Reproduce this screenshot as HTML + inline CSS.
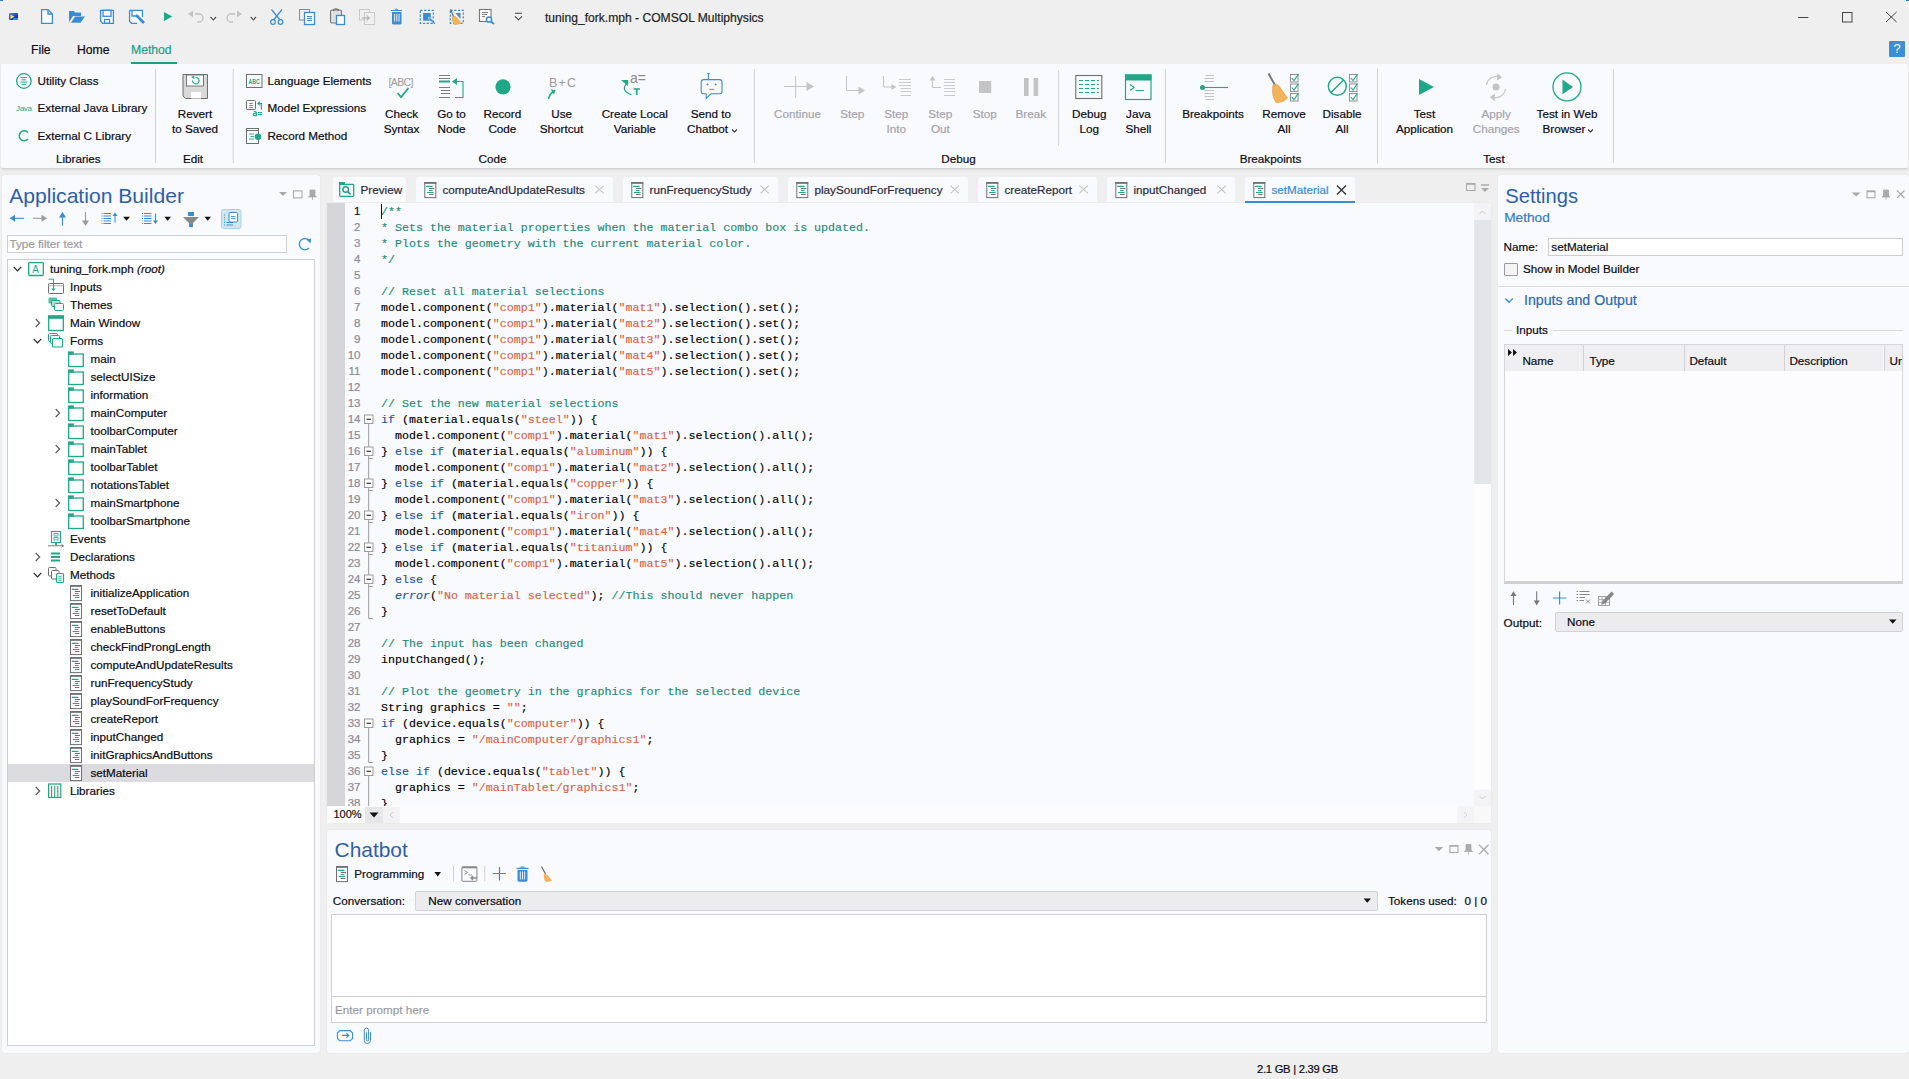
<!DOCTYPE html>
<html><head><meta charset="utf-8">
<style>
*{box-sizing:border-box;margin:0;padding:0}
html,body{width:1909px;height:1079px;overflow:hidden}
body{position:relative;background:#efefef;font-family:"Liberation Sans",sans-serif;font-size:12px;color:#1c1c28;line-height:1}
.a{position:absolute}
.t{position:absolute;white-space:nowrap;line-height:1;-webkit-text-stroke:0.2px currentColor}
.panel{position:absolute;background:#f9fafe;border-radius:2px;box-shadow:0 0 1px 0 rgba(0,0,0,0.18)}
svg{position:absolute;overflow:visible}
.code{position:absolute;font-family:"Liberation Mono",monospace;font-size:11.65px;line-height:16px;white-space:pre;color:#000;-webkit-text-stroke:0.15px currentColor}
.ln{position:absolute;font-family:"Liberation Mono",monospace;font-size:11.65px;line-height:16px;white-space:pre;color:#888;text-align:right}
.c{color:#1b8a7a}.s{color:#dc5f48}.k{color:#22549c}.e{color:#22549c;font-style:italic}
</style></head>
<body>
<!-- title -->
<svg width="1909" height="35" style="left:0;top:0">
 <g fill="none" stroke-width="1.3">
  <defs><linearGradient id="ag" x1="0" y1="0" x2="1" y2="1"><stop offset="0" stop-color="#5a8ae0"/><stop offset="0.6" stop-color="#1d3fb0"/><stop offset="1" stop-color="#0a1a70"/></linearGradient></defs>
  <rect x="9" y="13" width="9" height="7" rx="1" fill="url(#ag)"/>
  <path d="M10.5 14.5 L14.5 16.8 L10.5 19 Z" fill="#f2e860"/>
  <path d="M13.5 18 H18 V20 H13 Z" fill="#3aa0f0" opacity="0.8"/>
  <rect x="0" y="0" width="3" height="1" fill="#2a7ad0"/>
  <rect x="1906" y="0" width="3" height="1" fill="#2a7ad0"/>
  <path d="M41.6 9.6 H48 L52.4 14 V23.4 H41.6 Z" fill="#fff" stroke="#3a8cd2"/><path d="M48 9.6 V14 H52.4" stroke="#3a8cd2"/>
  <path d="M69 11 H74 L75 12.5 H81 V16 H73 L69 22 Z" fill="#3a8cd2"/>
  <path d="M71 22.8 L75 16.5 H85 L80.5 22.8 Z" fill="#3a8cd2"/>
  <path d="M100.6 10.3 H113.4 V23.3 H102.6 L100.6 21.3 Z" fill="#fff" stroke="#3a8cd2"/>
  <rect x="103" y="10.3" width="8" height="6" stroke="#3a8cd2"/>
  <rect x="104.5" y="19.5" width="5" height="3.8" stroke="#3a8cd2"/>
  <path d="M129.6 10.3 H142.4 V17 L137 23.3 H131.6 L129.6 21.3 Z" fill="#fff" stroke="none"/><path d="M129.6 10.3 H142.4 V17 M129.6 10.3 V21.3 L131.6 23.3 H137" stroke="#3a8cd2"/>
  <path d="M132 10.3 V16 H138" stroke="#3a8cd2"/>
  <path d="M136 15 L144 23" stroke="#3a8cd2" stroke-width="2.6"/>
  <path d="M164 12 L172.3 16.5 L164 21 Z" fill="#1ea888"/>
  <path d="M195 14 H199 A4 4 0 0 1 199 22 H197" stroke="#c2c2c2" stroke-width="1.3"/>
  <path d="M188 14 L193 10.8 V17.2 Z" fill="#c2c2c2"/>
  <path d="M210.5 17 L213.3 19.8 L216 17" stroke="#555" stroke-width="1.2"/>
  <path d="M235 14 H231 A4 4 0 0 0 231 22 H233" stroke="#c2c2c2" stroke-width="1.3"/>
  <path d="M242 14 L237 10.8 V17.2 Z" fill="#c2c2c2"/>
  <path d="M250.7 17 L253.4 19.8 L256 17" stroke="#555" stroke-width="1.2"/>
  <g stroke="#3a8cd2" stroke-width="1.2"><path d="M271.5 9.5 L280 20 M282 9.5 L273.5 20"/><circle cx="273" cy="22" r="2.3"/><circle cx="280.5" cy="22" r="2.3"/></g>
  <rect x="299.5" y="9.5" width="10" height="10.5" stroke="#888" stroke-width="1"/>
  <rect x="304.5" y="12.5" width="10" height="12" fill="#fff" stroke="#3a8cd2" stroke-width="1.3"/>
  <path d="M307 16.5 H312 M307 18.5 H312 M307 20.5 H312" stroke="#3a8cd2" stroke-width="1"/>
  <rect x="330.5" y="10" width="11" height="13" rx="1.5" fill="#e0e0e0" stroke="#777" stroke-width="1.1"/>
  <path d="M333.5 11 A2.5 2 0 0 1 338.5 11" stroke="#777" stroke-width="1.5"/>
  <rect x="336.5" y="15.5" width="8" height="9" fill="#fff" stroke="#3a8cd2" stroke-width="1.3"/>
  <rect x="359.5" y="9.5" width="10" height="10.5" stroke="#c8c8c8" stroke-width="1"/>
  <rect x="364.5" y="12.5" width="10" height="12" fill="#f0f0f0" stroke="#c8c8c8" stroke-width="1"/>
  <path d="M362 18 H369 M366.5 15.5 L369.5 18 L366.5 20.5" stroke="#bbb" stroke-width="1.3"/>
  <path d="M391 10.5 H402 M395 9.3 H398" stroke="#3a8cd2" stroke-width="1.1"/>
  <path d="M392 12 H401.5 V23.2 Q401.5 24.6 400 24.6 H393.5 Q392 24.6 392 23.2 Z" fill="#3a8cd2"/>
  <path d="M394.6 13.8 V21.5 M396.8 13.8 V21.5 M399 13.8 V21.5" stroke="#fff" stroke-width="0.9"/>
  <rect x="420.3" y="10.3" width="13" height="13" stroke="#3a8cd2" stroke-width="1.2" stroke-dasharray="2.2 1.6"/>
  <rect x="423.1" y="13" width="7.7" height="7.7" fill="#3a8cd2"/>
  <path d="M428.3 17 L433.4 20 L430 21.8 Z" fill="#3a8cd2" stroke="#f0f0f0" stroke-width="0.6"/>
  <path d="M431.5 20.5 L434.9 23.8" stroke="#3a8cd2" stroke-width="1.2"/>
  <rect x="450.3" y="10.3" width="13" height="13" stroke="#3a8cd2" stroke-width="1.2" stroke-dasharray="2.2 1.6"/>
  <path d="M455.4 13 H460.5 V18.9 Z" fill="#3a8cd2"/>
  <path d="M450.6 9.3 L453.6 17" stroke="#666" stroke-width="1.1"/>
  <path d="M452.5 16.5 Q455 15.5 456.5 17.5 L461 22.5 Q458 25 454 24.5 Q451.5 20 452.5 16.5 Z" fill="#f0b65a" stroke="#e09a3a" stroke-width="0.5"/>
  <rect x="479.5" y="9.5" width="11.5" height="12" stroke="#777" stroke-width="1.1" fill="#fff"/>
  <path d="M482 12.5 H488 M482 14.5 H487 M482 16.5 H485" stroke="#777" stroke-width="0.9"/>
  <circle cx="489" cy="19.5" r="2.6" stroke="#3a8cd2" stroke-width="1.5" fill="#fff"/>
  <path d="M491 21.5 L494 24.2" stroke="#3a8cd2" stroke-width="1.8"/>
  <path d="M515 13.3 H522 M515 16.3 L518.5 19.8 L522 16.3" stroke="#444" stroke-width="1.1"/>
 </g>
 <g stroke="#444" stroke-width="1" fill="none">
  <path d="M1798 17.5 H1808.4"/>
  <rect x="1842.5" y="12.5" width="9.5" height="9.5"/>
  <path d="M1886 12 L1896.6 22 M1896.6 12 L1886 22"/>
 </g>
</svg>
<div class="t" style="left:545.00px;top:12.26px;font-size:12.1px;color:#222;">tuning_fork.mph - COMSOL Multiphysics</div>
<div class="t" style="left:31.00px;top:43.67px;font-size:12.2px;color:#0a0a14;">File</div>
<div class="t" style="left:77.00px;top:43.67px;font-size:12.2px;color:#0a0a14;">Home</div>
<div class="t" style="left:131.00px;top:43.67px;font-size:12.2px;color:#1aa08a;">Method</div>
<div class="a" style="left:131px;top:62px;width:46px;height:2px;background:#1aa08a"></div>
<div class="a" style="left:1889px;top:41px;width:16px;height:16px;background:#3a8fd6;border-radius:1px;color:#fff;font-size:13px;text-align:center;line-height:16px">?</div>
<!-- panels -->
<div class="panel" style="left:1px;top:64px;width:1907px;height:105px;border-bottom:1px solid #d4d4d4;box-shadow:0 1px 2px rgba(0,0,0,0.08)"></div>
<div class="panel" style="left:2px;top:175px;width:318px;height:878px"></div>
<div class="panel" style="left:327px;top:203px;width:1164px;height:620px;border-radius:0 0 4px 4px"></div>
<div class="panel" style="left:327px;top:830px;width:1164px;height:223px"></div>
<div class="panel" style="left:1498px;top:175px;width:411px;height:878px"></div>
<div class="t" style="left:1257.00px;top:1064.02px;font-size:11.2px;color:#0a0a14;letter-spacing:-0.25px">2.1 GB | 2.39 GB</div>
<!-- ribbon -->
<svg width="1909" height="170" style="left:0;top:0" fill="none">
<path d="M155.5 69 V163" stroke="#d0d0d4" stroke-width="1"/>
<path d="M233.2 69 V163" stroke="#d0d0d4" stroke-width="1"/>
<path d="M754.4 69 V163" stroke="#d0d0d4" stroke-width="1"/>
<path d="M1058.6 70 V146" stroke="#d0d0d4" stroke-width="1"/>
<path d="M1165.4 69 V163" stroke="#d0d0d4" stroke-width="1"/>
<path d="M1377.5 69 V163" stroke="#d0d0d4" stroke-width="1"/>
<path d="M1613.4 69 V163" stroke="#d0d0d4" stroke-width="1"/>
<circle cx="23.9" cy="81" r="7.3" stroke="#1ea888" stroke-width="1.3"/><path d="M20.5 77.5 H27 M21.5 79.8 H26 M20.5 82.1 H27 M21.5 84.4 H26" stroke="#1ea888" stroke-width="1"/>
<text x="16" y="111" font-family="Liberation Sans" font-size="8" fill="#1ea888" textLength="16">Java</text>
<path d="M28 132.5 A5 5 0 1 0 28 139" stroke="#1ea888" stroke-width="1.4"/>
<path d="M183 74.5 H207.5 V98.5 H185.5 L183 96 Z" fill="#d9d9d9" stroke="#6e6e6e" stroke-width="1"/><rect x="186.5" y="75" width="17" height="11" fill="#fff" stroke="#6e6e6e" stroke-width="0.9"/><rect x="191" y="92" width="10" height="6.5" fill="#fff"/><path d="M192.5 80.5 A3.3 3.3 0 1 0 195.5 77.3" stroke="#1ea888" stroke-width="1.2"/><path d="M191 77 L194 75.8 L194.5 79" fill="#1ea888"/>
<rect x="246.5" y="74.5" width="15.5" height="13" stroke="#6e6e6e" stroke-width="1"/><text x="248.6" y="83.8" font-family="Liberation Sans" font-weight="bold" font-size="6.6" fill="#1ea888" textLength="11.2" lengthAdjust="spacingAndGlyphs">ABC</text>
<rect x="246.5" y="100.5" width="9" height="9" rx="1" fill="#fff" stroke="#6e6e6e" stroke-width="1"/><path d="M249.2 103.4 H252.8 M249.2 105.5 H252.8 M249.2 107.5 H252.8" stroke="#6e6e6e" stroke-width="0.9"/><path d="M259.5 103.5 H261.4 V109.6" stroke="#1ea888" stroke-width="1.2"/><path d="M257 103.5 L259.8 101 V106 Z" fill="#1ea888"/><path d="M253.8 111.6 Q256.4 111.2 256.4 113 V115.6 H254.5 Q253.1 115.6 253.1 114.4 Q253.1 113.4 254.6 113.4 H256.4 M258 112.5 H262 M258 114.5 H262" stroke="#1ea888" stroke-width="1.1"/>
<rect x="246.5" y="128.5" width="12" height="15" stroke="#6e6e6e" stroke-width="1"/><path d="M246.5 130.5 H258.5" stroke="#6e6e6e" stroke-width="1"/><path d="M249 134 H254 M250.5 136.5 H254 M249 139 H254" stroke="#1ea888" stroke-width="0.9"/><circle cx="258" cy="136.8" r="3.3" fill="#1ea888"/>
<text x="388.5" y="86" font-family="Liberation Sans" font-size="10.5" fill="#999" textLength="25">[ABC]</text><path d="M397.5 93 L401 97 L408.5 88" stroke="#1ea888" stroke-width="1.8"/>
<path d="M439 75.5 H450 M439 78.5 H450 M439 87.5 H450 M441 90.5 H450 M441 93.5 H450 M439 97.5 H450" stroke="#6e6e6e" stroke-width="0.9"/><path d="M439 81.5 H450" stroke="#1ea888" stroke-width="2"/><path d="M454 81.5 H463 V97.5 H455" stroke="#1ea888" stroke-width="1.1"/><path d="M452 81.5 L457 78 V85 Z" fill="#1ea888"/>
<circle cx="503" cy="86.8" r="7.6" fill="#1ea888"/>
<text x="549" y="86.5" font-family="Liberation Sans" font-size="12.5" fill="#999" textLength="27">B+C</text><path d="M548.5 99 Q549.5 94 553 92" stroke="#1ea888" stroke-width="1.6"/><path d="M550.5 89.5 L555.5 90 L554 94.5 Z" fill="#1ea888"/>
<text x="630" y="82.8" font-family="Liberation Sans" font-size="14" fill="#8c8c8c">a=</text><path d="M633.5 89 H640 M636.7 89 V95" stroke="#1ea888" stroke-width="1.7"/><path d="M626.5 83.5 Q620.5 91 631.5 94.7" stroke="#1ea888" stroke-width="1.2"/><path d="M621.2 80 L628.3 80 L627.8 86.3 Z" fill="#1ea888"/>
<path d="M708.4 73.5 V79 M707.2 73.5 H709.6" stroke="#3a8cd2" stroke-width="1.1"/><path d="M703.6 79.6 H719.6 Q722 79.6 722 82 V91.4 Q722 93.8 719.6 93.8 H711 L706.2 98.5 V93.8 H703.6 Q701.2 93.8 701.2 91.4 V82 Q701.2 79.6 703.6 79.6 Z" stroke="#3a8cd2" stroke-width="1.1"/><path d="M706.5 84.5 H708.5 M707.5 83.5 V85.5 M714.6 84.5 H716.6 M715.6 83.5 V85.5 M709.3 89.4 H714.2" stroke="#3a8cd2" stroke-width="0.9"/>
<path d="M732 129.5 L734.5 132 L737 129.5" stroke="#333" stroke-width="1.1"/>
<path d="M795.6 76 V97.7 M784 86.5 H807" stroke="#c4c4c4" stroke-width="1"/><path d="M806.5 82 L814 86.5 L806.5 91 Z" fill="#c4c4c4"/>
<path d="M846.5 76 V90.5 H859" stroke="#c4c4c4" stroke-width="1"/><path d="M858.5 86.5 L865 90.5 L858.5 94.5 Z" fill="#c4c4c4"/>
<path d="M883.5 76 V87 H892" stroke="#c4c4c4" stroke-width="1"/><path d="M891.5 84 L896.5 87 L891.5 90 Z" fill="#c4c4c4"/><path d="M899 79.5 H911 M899 82.5 H911 M899 85.5 H911 M900.5 88.5 H911 M900.5 91.5 H911 M900.5 95.5 H911" stroke="#c4c4c4" stroke-width="0.9"/>
<path d="M932.5 80 V87.5 H941" stroke="#c4c4c4" stroke-width="1"/><path d="M929.5 80.5 L932.5 76 L935.5 80.5 Z" fill="#c4c4c4"/><path d="M944 79.5 H955 M944 82.5 H955 M944 85.5 H955 M944 88.5 H955 M944 91.5 H955 M944 95.5 H955" stroke="#c4c4c4" stroke-width="0.9"/>
<rect x="979" y="81" width="12.2" height="12" fill="#c4c4c4"/><rect x="1024" y="78" width="4.6" height="18" fill="#c4c4c4"/><rect x="1033.6" y="78" width="4.6" height="18" fill="#c4c4c4"/>
<rect x="1075.8" y="75.5" width="26" height="23" stroke="#6e6e6e" stroke-width="1.1"/><path d="M1079 80.5 H1083 M1085 80.5 H1089 M1091 80.5 H1095 M1097 80.5 H1099" stroke="#1ea888" stroke-width="1"/><path d="M1079 84.5 H1083 M1085 84.5 H1089 M1091 84.5 H1095 M1097 84.5 H1099" stroke="#1ea888" stroke-width="1"/><path d="M1079 88.5 H1083 M1085 88.5 H1089 M1091 88.5 H1095 M1097 88.5 H1099" stroke="#1ea888" stroke-width="1"/><path d="M1079 92.5 H1083 M1085 92.5 H1089 M1091 92.5 H1095 M1097 92.5 H1099" stroke="#1ea888" stroke-width="1"/>
<rect x="1125.5" y="75" width="25.5" height="24.5" stroke="#1ea888" stroke-width="1.2"/><rect x="1125" y="74.5" width="26.5" height="6" fill="#1ea888"/><path d="M1130 84.5 L1134 87.5 L1130 90.5 M1135.5 90.5 H1144" stroke="#1ea888" stroke-width="1.1"/>
<path d="M1205.5 75.5 H1214 M1204.5 78.5 H1214 M1204.5 81.5 H1214 M1204.5 90.5 H1214 M1204.5 93.5 H1214 M1204.5 96.5 H1214 M1205.5 99.5 H1214" stroke="#bbb" stroke-width="0.9"/><circle cx="1202.5" cy="87.5" r="2.5" fill="#1ea888"/><path d="M1205 87.5 H1228" stroke="#1ea888" stroke-width="1.1"/>
<path d="M1268.5 73.5 L1275.5 86" stroke="#777" stroke-width="2"/><path d="M1273 85 Q1277 83 1279 86 L1287.5 98 Q1283 103 1276 102.5 Q1271 95 1273 85 Z" fill="#f2b35c" stroke="#e09a3a" stroke-width="0.6"/><rect x="1290.5" y="74.5" width="7.5" height="7.5" stroke="#888" stroke-width="0.9"/><path d="M1291.8 78 L1294 80.5 L1298.5 74" stroke="#1ea888" stroke-width="1.1"/><rect x="1290.5" y="84.0" width="7.5" height="7.5" stroke="#888" stroke-width="0.9"/><path d="M1291.8 87.5 L1294 90.0 L1298.5 83.5" stroke="#1ea888" stroke-width="1.1"/><rect x="1290.5" y="93.5" width="7.5" height="7.5" stroke="#888" stroke-width="0.9"/><path d="M1291.8 97 L1294 99.5 L1298.5 93" stroke="#1ea888" stroke-width="1.1"/>
<circle cx="1337.3" cy="86.3" r="9" stroke="#1ea888" stroke-width="1.4"/><path d="M1331 92.6 L1343.6 80" stroke="#1ea888" stroke-width="1.4"/><rect x="1349.5" y="74.5" width="7.5" height="7.5" stroke="#888" stroke-width="0.9"/><path d="M1350.8 78 L1353 80.5 L1357.5 74" stroke="#1ea888" stroke-width="1.1"/><rect x="1349.5" y="84.0" width="7.5" height="7.5" stroke="#888" stroke-width="0.9"/><path d="M1350.8 87.5 L1353 90.0 L1357.5 83.5" stroke="#1ea888" stroke-width="1.1"/><rect x="1349.5" y="93.5" width="7.5" height="7.5" stroke="#888" stroke-width="0.9"/><path d="M1350.8 97 L1353 99.5 L1357.5 93" stroke="#1ea888" stroke-width="1.1"/>
<path d="M1419 79 L1434 87 L1419 95 Z" fill="#1ea888"/>
<circle cx="1496" cy="87" r="3.5" fill="#c4c4c4"/><path d="M1486.5 85 A10 10 0 0 1 1500 77 M1505.5 89 A10 10 0 0 1 1492 97" stroke="#c4c4c4" stroke-width="1.2"/><path d="M1497.5 73 L1502 77.5 L1497 80.5 Z M1494.5 101.5 L1490 97 L1495 93.5 Z" fill="#c4c4c4"/>
<circle cx="1567" cy="86.9" r="14" stroke="#1ea888" stroke-width="1.3"/><path d="M1562.5 79.5 L1573 86.9 L1562.5 94.3 Z" fill="#1ea888"/><path d="M1588 129.5 L1590.5 132 L1593 129.5" stroke="#333" stroke-width="1.1"/>
</svg>
<div class="t" style="left:37.50px;top:74.80px;font-size:11.7px;color:#0a0a14;">Utility Class</div>
<div class="t" style="left:37.50px;top:101.90px;font-size:11.7px;color:#0a0a14;">External Java Library</div>
<div class="t" style="left:37.50px;top:130.10px;font-size:11.7px;color:#0a0a14;">External C Library</div>
<div class="t" style="left:-121.70px;width:400px;text-align:center;top:152.80px;font-size:11.7px;color:#0a0a14;">Libraries</div>
<div class="t" style="left:-5.00px;width:400px;text-align:center;top:107.60px;font-size:11.7px;color:#0a0a14;">Revert</div>
<div class="t" style="left:-5.00px;width:400px;text-align:center;top:122.60px;font-size:11.7px;color:#0a0a14;">to Saved</div>
<div class="t" style="left:-7.00px;width:400px;text-align:center;top:152.80px;font-size:11.7px;color:#0a0a14;">Edit</div>
<div class="t" style="left:267.40px;top:74.80px;font-size:11.7px;color:#0a0a14;">Language Elements</div>
<div class="t" style="left:267.40px;top:101.90px;font-size:11.7px;color:#0a0a14;">Model Expressions</div>
<div class="t" style="left:267.40px;top:130.10px;font-size:11.7px;color:#0a0a14;">Record Method</div>
<div class="t" style="left:201.60px;width:400px;text-align:center;top:107.60px;font-size:11.7px;color:#0a0a14;">Check</div>
<div class="t" style="left:201.60px;width:400px;text-align:center;top:122.60px;font-size:11.7px;color:#0a0a14;">Syntax</div>
<div class="t" style="left:251.50px;width:400px;text-align:center;top:107.60px;font-size:11.7px;color:#0a0a14;">Go to</div>
<div class="t" style="left:251.50px;width:400px;text-align:center;top:122.60px;font-size:11.7px;color:#0a0a14;">Node</div>
<div class="t" style="left:302.40px;width:400px;text-align:center;top:107.60px;font-size:11.7px;color:#0a0a14;">Record</div>
<div class="t" style="left:302.40px;width:400px;text-align:center;top:122.60px;font-size:11.7px;color:#0a0a14;">Code</div>
<div class="t" style="left:361.60px;width:400px;text-align:center;top:107.60px;font-size:11.7px;color:#0a0a14;">Use</div>
<div class="t" style="left:361.60px;width:400px;text-align:center;top:122.60px;font-size:11.7px;color:#0a0a14;">Shortcut</div>
<div class="t" style="left:434.80px;width:400px;text-align:center;top:107.60px;font-size:11.7px;color:#0a0a14;">Create Local</div>
<div class="t" style="left:434.80px;width:400px;text-align:center;top:122.60px;font-size:11.7px;color:#0a0a14;">Variable</div>
<div class="t" style="left:510.80px;width:400px;text-align:center;top:107.60px;font-size:11.7px;color:#0a0a14;">Send to</div>
<div class="t" style="left:507.50px;width:400px;text-align:center;top:122.60px;font-size:11.7px;color:#0a0a14;">Chatbot</div>
<div class="t" style="left:292.50px;width:400px;text-align:center;top:152.80px;font-size:11.7px;color:#0a0a14;">Code</div>
<div class="t" style="left:597.50px;width:400px;text-align:center;top:107.60px;font-size:11.7px;color:#a3a3ad;">Continue</div>
<div class="t" style="left:652.20px;width:400px;text-align:center;top:107.60px;font-size:11.7px;color:#a3a3ad;">Step</div>
<div class="t" style="left:696.30px;width:400px;text-align:center;top:107.60px;font-size:11.7px;color:#a3a3ad;">Step</div>
<div class="t" style="left:696.30px;width:400px;text-align:center;top:122.60px;font-size:11.7px;color:#a3a3ad;">Into</div>
<div class="t" style="left:740.30px;width:400px;text-align:center;top:107.60px;font-size:11.7px;color:#a3a3ad;">Step</div>
<div class="t" style="left:740.30px;width:400px;text-align:center;top:122.60px;font-size:11.7px;color:#a3a3ad;">Out</div>
<div class="t" style="left:784.70px;width:400px;text-align:center;top:107.60px;font-size:11.7px;color:#a3a3ad;">Stop</div>
<div class="t" style="left:830.80px;width:400px;text-align:center;top:107.60px;font-size:11.7px;color:#a3a3ad;">Break</div>
<div class="t" style="left:889.30px;width:400px;text-align:center;top:107.60px;font-size:11.7px;color:#0a0a14;">Debug</div>
<div class="t" style="left:889.30px;width:400px;text-align:center;top:122.60px;font-size:11.7px;color:#0a0a14;">Log</div>
<div class="t" style="left:938.40px;width:400px;text-align:center;top:107.60px;font-size:11.7px;color:#0a0a14;">Java</div>
<div class="t" style="left:938.40px;width:400px;text-align:center;top:122.60px;font-size:11.7px;color:#0a0a14;">Shell</div>
<div class="t" style="left:758.50px;width:400px;text-align:center;top:152.80px;font-size:11.7px;color:#0a0a14;">Debug</div>
<div class="t" style="left:1013.00px;width:400px;text-align:center;top:107.60px;font-size:11.7px;color:#0a0a14;">Breakpoints</div>
<div class="t" style="left:1084.00px;width:400px;text-align:center;top:107.60px;font-size:11.7px;color:#0a0a14;">Remove</div>
<div class="t" style="left:1084.00px;width:400px;text-align:center;top:122.60px;font-size:11.7px;color:#0a0a14;">All</div>
<div class="t" style="left:1142.00px;width:400px;text-align:center;top:107.60px;font-size:11.7px;color:#0a0a14;">Disable</div>
<div class="t" style="left:1142.00px;width:400px;text-align:center;top:122.60px;font-size:11.7px;color:#0a0a14;">All</div>
<div class="t" style="left:1070.50px;width:400px;text-align:center;top:152.80px;font-size:11.7px;color:#0a0a14;">Breakpoints</div>
<div class="t" style="left:1224.50px;width:400px;text-align:center;top:107.60px;font-size:11.7px;color:#0a0a14;">Test</div>
<div class="t" style="left:1224.50px;width:400px;text-align:center;top:122.60px;font-size:11.7px;color:#0a0a14;">Application</div>
<div class="t" style="left:1296.20px;width:400px;text-align:center;top:107.60px;font-size:11.7px;color:#a3a3ad;">Apply</div>
<div class="t" style="left:1296.20px;width:400px;text-align:center;top:122.60px;font-size:11.7px;color:#a3a3ad;">Changes</div>
<div class="t" style="left:1367.00px;width:400px;text-align:center;top:107.60px;font-size:11.7px;color:#0a0a14;">Test in Web</div>
<div class="t" style="left:1364.00px;width:400px;text-align:center;top:122.60px;font-size:11.7px;color:#0a0a14;">Browser</div>
<div class="t" style="left:1294.00px;width:400px;text-align:center;top:152.80px;font-size:11.7px;color:#0a0a14;">Test</div>
<!-- tree -->
<div class="t" style="left:9.20px;top:185.34px;font-size:21.1px;color:#2d5fa8;-webkit-text-stroke:0">Application Builder</div>
<div class="a" style="left:7px;top:235px;width:280px;height:18px;background:#fff;border:1px solid #d0d0d0"></div>
<div class="t" style="left:9.50px;top:238.40px;font-size:11.7px;color:#9a9aa2;">Type filter text</div>
<div class="a" style="left:7px;top:259px;width:308px;height:787px;background:#fff;border:1px solid #cdcdd2"></div>
<div class="a" style="left:8px;top:764px;width:306px;height:18px;background:#dcdce0"></div>
<div class="t" style="left:50.00px;top:263.40px;font-size:11.7px;color:#0a0a14;">tuning_fork.mph <i>(root)</i></div>
<div class="t" style="left:70.00px;top:281.40px;font-size:11.7px;color:#0a0a14;">Inputs</div>
<div class="t" style="left:70.00px;top:299.40px;font-size:11.7px;color:#0a0a14;">Themes</div>
<div class="t" style="left:70.00px;top:317.40px;font-size:11.7px;color:#0a0a14;">Main Window</div>
<div class="t" style="left:70.00px;top:335.40px;font-size:11.7px;color:#0a0a14;">Forms</div>
<div class="t" style="left:90.50px;top:353.40px;font-size:11.7px;color:#0a0a14;">main</div>
<div class="t" style="left:90.50px;top:371.40px;font-size:11.7px;color:#0a0a14;">selectUISize</div>
<div class="t" style="left:90.50px;top:389.40px;font-size:11.7px;color:#0a0a14;">information</div>
<div class="t" style="left:90.50px;top:407.40px;font-size:11.7px;color:#0a0a14;">mainComputer</div>
<div class="t" style="left:90.50px;top:425.40px;font-size:11.7px;color:#0a0a14;">toolbarComputer</div>
<div class="t" style="left:90.50px;top:443.40px;font-size:11.7px;color:#0a0a14;">mainTablet</div>
<div class="t" style="left:90.50px;top:461.40px;font-size:11.7px;color:#0a0a14;">toolbarTablet</div>
<div class="t" style="left:90.50px;top:479.40px;font-size:11.7px;color:#0a0a14;">notationsTablet</div>
<div class="t" style="left:90.50px;top:497.40px;font-size:11.7px;color:#0a0a14;">mainSmartphone</div>
<div class="t" style="left:90.50px;top:515.40px;font-size:11.7px;color:#0a0a14;">toolbarSmartphone</div>
<div class="t" style="left:70.00px;top:533.40px;font-size:11.7px;color:#0a0a14;">Events</div>
<div class="t" style="left:70.00px;top:551.40px;font-size:11.7px;color:#0a0a14;">Declarations</div>
<div class="t" style="left:70.00px;top:569.40px;font-size:11.7px;color:#0a0a14;">Methods</div>
<div class="t" style="left:90.50px;top:587.40px;font-size:11.7px;color:#0a0a14;">initializeApplication</div>
<div class="t" style="left:90.50px;top:605.40px;font-size:11.7px;color:#0a0a14;">resetToDefault</div>
<div class="t" style="left:90.50px;top:623.40px;font-size:11.7px;color:#0a0a14;">enableButtons</div>
<div class="t" style="left:90.50px;top:641.40px;font-size:11.7px;color:#0a0a14;">checkFindProngLength</div>
<div class="t" style="left:90.50px;top:659.40px;font-size:11.7px;color:#0a0a14;">computeAndUpdateResults</div>
<div class="t" style="left:90.50px;top:677.40px;font-size:11.7px;color:#0a0a14;">runFrequencyStudy</div>
<div class="t" style="left:90.50px;top:695.40px;font-size:11.7px;color:#0a0a14;">playSoundForFrequency</div>
<div class="t" style="left:90.50px;top:713.40px;font-size:11.7px;color:#0a0a14;">createReport</div>
<div class="t" style="left:90.50px;top:731.40px;font-size:11.7px;color:#0a0a14;">inputChanged</div>
<div class="t" style="left:90.50px;top:749.40px;font-size:11.7px;color:#0a0a14;">initGraphicsAndButtons</div>
<div class="t" style="left:90.50px;top:767.40px;font-size:11.7px;color:#0a0a14;">setMaterial</div>
<div class="t" style="left:70.00px;top:785.40px;font-size:11.7px;color:#0a0a14;">Libraries</div>
<svg width="330" height="1079" style="left:0;top:0" fill="none">
<path d="M11 218.3 H24" stroke="#3a8cd2" stroke-width="1.1"/><path d="M9.7 218.3 L15 214.8 V221.8 Z" fill="#3a8cd2"/><path d="M33 218.3 H45" stroke="#999" stroke-width="1.1"/><path d="M47 218.3 L41.5 214.8 V221.8 Z" fill="#999"/><path d="M62.5 214 V225.8" stroke="#3a8cd2" stroke-width="1.1"/><path d="M62.5 212 L59 217.5 H66 Z" fill="#3a8cd2"/><path d="M85.5 212 V222" stroke="#999" stroke-width="1.1"/><path d="M85.5 226 L82 220.5 H89 Z" fill="#999"/>
<path d="M101.5 213.5 H102.5 M101.5 216 H102.5 M101.5 218.5 H102.5 M101.5 221 H102.5 M101.5 223.5 H102.5" stroke="#3a8cd2" stroke-width="1"/><path d="M103.5 213.5 H111.0 M103.5 216 H111.0 M103.5 218.5 H111.0 M103.5 221 H111.0 M103.5 223.5 H111.0" stroke="#3a8cd2" stroke-width="1"/><path d="M115.0 214 V222.5" stroke="#3a8cd2" stroke-width="1.1"/><path d="M115.0 212.5 L112.5 216 H117.5 Z" fill="#3a8cd2"/><path d="M142 213.5 H143 M142 216 H143 M142 218.5 H143 M142 221 H143 M142 223.5 H143" stroke="#3a8cd2" stroke-width="1"/><path d="M144 213.5 H151.5 M144 216 H151.5 M144 218.5 H151.5 M144 221 H151.5 M144 223.5 H151.5" stroke="#3a8cd2" stroke-width="1"/><path d="M155.5 213.5 V222" stroke="#3a8cd2" stroke-width="1.1"/><path d="M155.5 224 L153 220.5 H158 Z" fill="#3a8cd2"/><path d="M123 216.8 L130 216.8 L126.5 220.7 Z" fill="#111"/><path d="M164.4 216.8 L171 216.8 L167.7 220.7 Z" fill="#111"/><path d="M204.5 216.8 L211 216.8 L207.7 220.7 Z" fill="#111"/>
<rect x="188" y="212" width="6" height="4" fill="#3a8cd2"/><path d="M183 217 H199 L193 223 V227 H189 V223 Z" fill="#888"/><rect x="189.8" y="224" width="2.4" height="3.2" fill="#3a8cd2"/>
<rect x="221.5" y="209.5" width="19.5" height="19" rx="2" fill="#cfe5f8" stroke="#a9d0f2" stroke-width="1"/><rect x="229" y="212.5" width="8.5" height="9.5" rx="1" fill="#fff" stroke="#3a8cd2" stroke-width="1"/><path d="M231 216.5 H235.5 M231 218.5 H235.5" stroke="#3a8cd2" stroke-width="0.9"/><path d="M224 215 H225 M224 217.5 H225 M224 220 H225 M224 222.5 H225 M224 225 H225 M226.5 222.5 H233 M226.5 225 H233" stroke="#3a8cd2" stroke-width="1"/>
<path d="M309.5 241 A5.6 5.6 0 1 0 309 248" stroke="#3a8cd2" stroke-width="1.3"/><path d="M306.5 239.5 L311 238.5 L310.5 243.5 Z" fill="#3a8cd2"/>
<path d="M279 192 H287 L283 196 Z" fill="#aaa"/><rect x="293.5" y="190.9" width="8.5" height="7" stroke="#aaa" stroke-width="1.1"/><path d="M310 190 H315 V195.5 L316.5 197 H308.5 L310 195.5 Z M312.5 197 V200" fill="#aaa" stroke="#aaa" stroke-width="0.8"/>
<path d="M13.7 266.8 L17.5 270.8 L21.3 266.8" stroke="#222" stroke-width="1.2"/><rect x="28.7" y="262.7" width="14.6" height="12.8" rx="0.8" stroke="#1ea888" stroke-width="1.3"/><text x="32.2" y="273" font-family="Liberation Sans" font-size="10" fill="#1ea888">A</text>
<rect x="48.5" y="283.5" width="15" height="10" rx="0.8" stroke="#6e6e6e" stroke-width="1"/><path d="M48.5 285.7 H63.5" stroke="#bbb" stroke-width="1.2"/><path d="M48.5 279.2 H53.5 V289.5" stroke="#1ea888" stroke-width="1"/><path d="M51.3 288.5 L53.5 291 L55.7 288.5 Z" fill="#1ea888"/>
<rect x="48.5" y="297.5" width="8.5" height="6" rx="1" fill="#1ea888" opacity="0.75"/><rect x="51.5" y="300.5" width="8.5" height="6" rx="1" fill="#b9ddd3" stroke="#1ea888" stroke-width="1"/><rect x="54.5" y="303.5" width="9" height="7" rx="1" fill="#fff" stroke="#1ea888" stroke-width="1"/>
<path d="M35.7 319 L39.7 323 L35.7 327" stroke="#555" stroke-width="1.1"/><rect x="48.7" y="316" width="14.6" height="14.5" stroke="#1ea888" stroke-width="1.3"/><rect x="48" y="315.5" width="16" height="3.3" fill="#1ea888"/>
<path d="M33.7 338.8 L37.5 342.8 L41.3 338.8" stroke="#222" stroke-width="1.2"/><rect x="48.5" y="333.5" width="9" height="8" rx="1" fill="#fff" stroke="#1ea888" stroke-width="1"/><rect x="50.5" y="335.5" width="9" height="8" rx="1" fill="#fff" stroke="#1ea888" stroke-width="1"/><rect x="52.5" y="338.5" width="10" height="8.5" rx="1" fill="#fff" stroke="#1ea888" stroke-width="1.2"/>
<rect x="68.7" y="354" width="14.6" height="12.5" stroke="#1ea888" stroke-width="1.3"/><rect x="68" y="351.4" width="5.8" height="3.2" fill="#1ea888"/>
<rect x="68.7" y="372" width="14.6" height="12.5" stroke="#1ea888" stroke-width="1.3"/><rect x="68" y="369.4" width="5.8" height="3.2" fill="#1ea888"/>
<rect x="68.7" y="390" width="14.6" height="12.5" stroke="#1ea888" stroke-width="1.3"/><rect x="68" y="387.4" width="5.8" height="3.2" fill="#1ea888"/>
<path d="M55.7 409 L59.7 413 L55.7 417" stroke="#555" stroke-width="1.1"/><rect x="68.7" y="408" width="14.6" height="12.5" stroke="#1ea888" stroke-width="1.3"/><rect x="68" y="405.4" width="5.8" height="3.2" fill="#1ea888"/>
<rect x="68.7" y="426" width="14.6" height="12.5" stroke="#1ea888" stroke-width="1.3"/><rect x="68" y="423.4" width="5.8" height="3.2" fill="#1ea888"/>
<path d="M55.7 445 L59.7 449 L55.7 453" stroke="#555" stroke-width="1.1"/><rect x="68.7" y="444" width="14.6" height="12.5" stroke="#1ea888" stroke-width="1.3"/><rect x="68" y="441.4" width="5.8" height="3.2" fill="#1ea888"/>
<rect x="68.7" y="462" width="14.6" height="12.5" stroke="#1ea888" stroke-width="1.3"/><rect x="68" y="459.4" width="5.8" height="3.2" fill="#1ea888"/>
<rect x="68.7" y="480" width="14.6" height="12.5" stroke="#1ea888" stroke-width="1.3"/><rect x="68" y="477.4" width="5.8" height="3.2" fill="#1ea888"/>
<path d="M55.7 499 L59.7 503 L55.7 507" stroke="#555" stroke-width="1.1"/><rect x="68.7" y="498" width="14.6" height="12.5" stroke="#1ea888" stroke-width="1.3"/><rect x="68" y="495.4" width="5.8" height="3.2" fill="#1ea888"/>
<rect x="68.7" y="516" width="14.6" height="12.5" stroke="#1ea888" stroke-width="1.3"/><rect x="68" y="513.4" width="5.8" height="3.2" fill="#1ea888"/>
<rect x="51.5" y="531.5" width="9" height="11" stroke="#1ea888" stroke-width="1.1"/><rect x="54" y="533.5" width="4" height="2.5" stroke="#1ea888" stroke-width="0.8"/><rect x="54" y="537.5" width="4" height="2.5" stroke="#1ea888" stroke-width="0.8"/><path d="M56 542.5 V545.5" stroke="#1ea888" stroke-width="1.8"/><path d="M48 545.8 H63.5 M61.5 544.3 L63.5 545.8 L61.5 547.3" stroke="#6e6e6e" stroke-width="0.9"/>
<path d="M35.7 553 L39.7 557 L35.7 561" stroke="#555" stroke-width="1.1"/><path d="M51 553.5 H60 M51 557 H60 M51 560.5 H60" stroke="#1ea888" stroke-width="1.8"/>
<path d="M33.7 572.8 L37.5 576.8 L41.3 572.8" stroke="#222" stroke-width="1.2"/><rect x="48.5" y="567.5" width="7.5" height="8.5" rx="1" fill="#fff" stroke="#6e6e6e" stroke-width="1"/><rect x="51.5" y="570.5" width="7.5" height="8.5" rx="1" fill="#fff" stroke="#6e6e6e" stroke-width="1"/><rect x="56.5" y="573.5" width="7" height="9" rx="1" fill="#fff" stroke="#1ea888" stroke-width="1.2"/><path d="M58.3 576.3 H61.7 M58.3 578.3 H61.7 M58.3 580.3 H61.7" stroke="#1ea888" stroke-width="0.9"/>
<rect x="70.5" y="585.6" width="11" height="15" fill="#fff" stroke="#6e6e73" stroke-width="1"/><path d="M70 585.9 H82" stroke="#6e6e73" stroke-width="1.8"/><path d="M72.3 589.4 H77.9 M75.2 593.5 H77.9 M73.1 595.5 H78.9" stroke="#1ea888" stroke-width="1.1" stroke-linecap="round"/><path d="M75.2 591.5 H79.6 M75.2 597.5 H78.9" stroke="#6e6e73" stroke-width="1" stroke-linecap="round"/>
<rect x="70.5" y="603.6" width="11" height="15" fill="#fff" stroke="#6e6e73" stroke-width="1"/><path d="M70 603.9 H82" stroke="#6e6e73" stroke-width="1.8"/><path d="M72.3 607.4 H77.9 M75.2 611.5 H77.9 M73.1 613.5 H78.9" stroke="#1ea888" stroke-width="1.1" stroke-linecap="round"/><path d="M75.2 609.5 H79.6 M75.2 615.5 H78.9" stroke="#6e6e73" stroke-width="1" stroke-linecap="round"/>
<rect x="70.5" y="621.6" width="11" height="15" fill="#fff" stroke="#6e6e73" stroke-width="1"/><path d="M70 621.9 H82" stroke="#6e6e73" stroke-width="1.8"/><path d="M72.3 625.4 H77.9 M75.2 629.5 H77.9 M73.1 631.5 H78.9" stroke="#1ea888" stroke-width="1.1" stroke-linecap="round"/><path d="M75.2 627.5 H79.6 M75.2 633.5 H78.9" stroke="#6e6e73" stroke-width="1" stroke-linecap="round"/>
<rect x="70.5" y="639.6" width="11" height="15" fill="#fff" stroke="#6e6e73" stroke-width="1"/><path d="M70 639.9 H82" stroke="#6e6e73" stroke-width="1.8"/><path d="M72.3 643.4 H77.9 M75.2 647.5 H77.9 M73.1 649.5 H78.9" stroke="#1ea888" stroke-width="1.1" stroke-linecap="round"/><path d="M75.2 645.5 H79.6 M75.2 651.5 H78.9" stroke="#6e6e73" stroke-width="1" stroke-linecap="round"/>
<rect x="70.5" y="657.6" width="11" height="15" fill="#fff" stroke="#6e6e73" stroke-width="1"/><path d="M70 657.9 H82" stroke="#6e6e73" stroke-width="1.8"/><path d="M72.3 661.4 H77.9 M75.2 665.5 H77.9 M73.1 667.5 H78.9" stroke="#1ea888" stroke-width="1.1" stroke-linecap="round"/><path d="M75.2 663.5 H79.6 M75.2 669.5 H78.9" stroke="#6e6e73" stroke-width="1" stroke-linecap="round"/>
<rect x="70.5" y="675.6" width="11" height="15" fill="#fff" stroke="#6e6e73" stroke-width="1"/><path d="M70 675.9 H82" stroke="#6e6e73" stroke-width="1.8"/><path d="M72.3 679.4 H77.9 M75.2 683.5 H77.9 M73.1 685.5 H78.9" stroke="#1ea888" stroke-width="1.1" stroke-linecap="round"/><path d="M75.2 681.5 H79.6 M75.2 687.5 H78.9" stroke="#6e6e73" stroke-width="1" stroke-linecap="round"/>
<rect x="70.5" y="693.6" width="11" height="15" fill="#fff" stroke="#6e6e73" stroke-width="1"/><path d="M70 693.9 H82" stroke="#6e6e73" stroke-width="1.8"/><path d="M72.3 697.4 H77.9 M75.2 701.5 H77.9 M73.1 703.5 H78.9" stroke="#1ea888" stroke-width="1.1" stroke-linecap="round"/><path d="M75.2 699.5 H79.6 M75.2 705.5 H78.9" stroke="#6e6e73" stroke-width="1" stroke-linecap="round"/>
<rect x="70.5" y="711.6" width="11" height="15" fill="#fff" stroke="#6e6e73" stroke-width="1"/><path d="M70 711.9 H82" stroke="#6e6e73" stroke-width="1.8"/><path d="M72.3 715.4 H77.9 M75.2 719.5 H77.9 M73.1 721.5 H78.9" stroke="#1ea888" stroke-width="1.1" stroke-linecap="round"/><path d="M75.2 717.5 H79.6 M75.2 723.5 H78.9" stroke="#6e6e73" stroke-width="1" stroke-linecap="round"/>
<rect x="70.5" y="729.6" width="11" height="15" fill="#fff" stroke="#6e6e73" stroke-width="1"/><path d="M70 729.9 H82" stroke="#6e6e73" stroke-width="1.8"/><path d="M72.3 733.4 H77.9 M75.2 737.5 H77.9 M73.1 739.5 H78.9" stroke="#1ea888" stroke-width="1.1" stroke-linecap="round"/><path d="M75.2 735.5 H79.6 M75.2 741.5 H78.9" stroke="#6e6e73" stroke-width="1" stroke-linecap="round"/>
<rect x="70.5" y="747.6" width="11" height="15" fill="#fff" stroke="#6e6e73" stroke-width="1"/><path d="M70 747.9 H82" stroke="#6e6e73" stroke-width="1.8"/><path d="M72.3 751.4 H77.9 M75.2 755.5 H77.9 M73.1 757.5 H78.9" stroke="#1ea888" stroke-width="1.1" stroke-linecap="round"/><path d="M75.2 753.5 H79.6 M75.2 759.5 H78.9" stroke="#6e6e73" stroke-width="1" stroke-linecap="round"/>
<rect x="70.5" y="765.6" width="11" height="15" fill="#fff" stroke="#6e6e73" stroke-width="1"/><path d="M70 765.9 H82" stroke="#6e6e73" stroke-width="1.8"/><path d="M72.3 769.4 H77.9 M75.2 773.5 H77.9 M73.1 775.5 H78.9" stroke="#1ea888" stroke-width="1.1" stroke-linecap="round"/><path d="M75.2 771.5 H79.6 M75.2 777.5 H78.9" stroke="#6e6e73" stroke-width="1" stroke-linecap="round"/>
<path d="M35.7 787 L39.7 791 L35.7 795" stroke="#555" stroke-width="1.1"/><rect x="48.6" y="784" width="12.2" height="13.5" fill="#fbeeee" stroke="#1ea888" stroke-width="1.2"/><path d="M51.6 786 V797 M54.7 786 V797 M57.8 786 V797" stroke="#1ea888" stroke-width="1"/>
</svg>
<!-- editor -->
<div class="a" style="left:327px;top:203px;width:1164px;height:620px;background:#f9fafe"></div>
<div class="a" style="left:327px;top:203px;width:18px;height:603px;background:#d5d5d9"></div>
<div class="a" style="left:333px;top:177px;width:73px;height:25px;background:#f9fafe;border-radius:3px 3px 0 0"></div>
<div class="t" style="left:360.50px;top:183.90px;font-size:11.7px;color:#2a2a3c;">Preview</div>
<div class="a" style="left:416px;top:177px;width:197px;height:25px;background:#f9fafe;border-radius:3px 3px 0 0"></div>
<div class="t" style="left:442.50px;top:183.90px;font-size:11.7px;color:#2a2a3c;">computeAndUpdateResults</div>
<div class="a" style="left:623px;top:177px;width:155px;height:25px;background:#f9fafe;border-radius:3px 3px 0 0"></div>
<div class="t" style="left:649.50px;top:183.90px;font-size:11.7px;color:#2a2a3c;">runFrequencyStudy</div>
<div class="a" style="left:788px;top:177px;width:180px;height:25px;background:#f9fafe;border-radius:3px 3px 0 0"></div>
<div class="t" style="left:814.50px;top:183.90px;font-size:11.7px;color:#2a2a3c;">playSoundForFrequency</div>
<div class="a" style="left:978px;top:177px;width:119px;height:25px;background:#f9fafe;border-radius:3px 3px 0 0"></div>
<div class="t" style="left:1004.50px;top:183.90px;font-size:11.7px;color:#2a2a3c;">createReport</div>
<div class="a" style="left:1107px;top:177px;width:128px;height:25px;background:#f9fafe;border-radius:3px 3px 0 0"></div>
<div class="t" style="left:1133.50px;top:183.90px;font-size:11.7px;color:#2a2a3c;">inputChanged</div>
<div class="a" style="left:1245px;top:177px;width:110px;height:25px;background:#f9fafe;border-radius:3px 3px 0 0"></div>
<div class="t" style="left:1271.50px;top:183.90px;font-size:11.7px;color:#3a8cd2;">setMaterial</div>
<div class="a" style="left:1474px;top:203px;width:17px;height:17px;background:#f3f3f5"></div>
<div class="a" style="left:1474px;top:220px;width:17px;height:264px;background:#e4e5e8"></div>
<div class="a" style="left:1474px;top:484px;width:17px;height:305px;background:#fdfdfe"></div>
<div class="a" style="left:1474px;top:790px;width:17px;height:16px;background:#f3f3f5"></div>
<div class="a" style="left:327px;top:806px;width:1164px;height:17px;background:#f9fafe"></div>
<div class="a" style="left:328px;top:807px;width:37px;height:16px;background:#fff"></div>
<div class="a" style="left:365px;top:807px;width:18px;height:16px;background:#e6e6e8"></div>
<div class="t" style="left:333.50px;top:809.29px;font-size:11px;color:#111;">100%</div>
<div class="a" style="left:400px;top:806px;width:1057px;height:17px;background:#fcfcfe"></div>
<div class="a" style="left:383px;top:807px;width:17px;height:16px;background:#f3f3f5"></div>
<div class="a" style="left:1474px;top:806px;width:17px;height:17px;background:#f8f8f9"></div>
<div class="a" style="left:1457px;top:806px;width:17px;height:17px;background:#f4f4f6"></div>
<div class="a" style="left:327px;top:203px;width:1147px;height:603px;overflow:hidden"><div class="code" style="left:54px;top:0.8px"><span class="c">/**</span>
<span class="c">* Sets the material properties when the material combo box is updated.</span>
<span class="c">* Plots the geometry with the current material color.</span>
<span class="c">*/</span>

<span class="c">// Reset all material selections</span>
model.component(<span class="s">&quot;comp1&quot;</span>).material(<span class="s">&quot;mat1&quot;</span>).selection().set();
model.component(<span class="s">&quot;comp1&quot;</span>).material(<span class="s">&quot;mat2&quot;</span>).selection().set();
model.component(<span class="s">&quot;comp1&quot;</span>).material(<span class="s">&quot;mat3&quot;</span>).selection().set();
model.component(<span class="s">&quot;comp1&quot;</span>).material(<span class="s">&quot;mat4&quot;</span>).selection().set();
model.component(<span class="s">&quot;comp1&quot;</span>).material(<span class="s">&quot;mat5&quot;</span>).selection().set();

<span class="c">// Set the new material selections</span>
<span class="k">if</span> (material.equals(<span class="s">&quot;steel&quot;</span>)) {
  model.component(<span class="s">&quot;comp1&quot;</span>).material(<span class="s">&quot;mat1&quot;</span>).selection().all();
} <span class="k">else if</span> (material.equals(<span class="s">&quot;aluminum&quot;</span>)) {
  model.component(<span class="s">&quot;comp1&quot;</span>).material(<span class="s">&quot;mat2&quot;</span>).selection().all();
} <span class="k">else if</span> (material.equals(<span class="s">&quot;copper&quot;</span>)) {
  model.component(<span class="s">&quot;comp1&quot;</span>).material(<span class="s">&quot;mat3&quot;</span>).selection().all();
} <span class="k">else if</span> (material.equals(<span class="s">&quot;iron&quot;</span>)) {
  model.component(<span class="s">&quot;comp1&quot;</span>).material(<span class="s">&quot;mat4&quot;</span>).selection().all();
} <span class="k">else if</span> (material.equals(<span class="s">&quot;titanium&quot;</span>)) {
  model.component(<span class="s">&quot;comp1&quot;</span>).material(<span class="s">&quot;mat5&quot;</span>).selection().all();
} <span class="k">else</span> {
  <span class="e">error</span>(<span class="s">&quot;No material selected&quot;</span>); <span class="c">//This should never happen</span>
}

<span class="c">// The input has been changed</span>
inputChanged();

<span class="c">// Plot the geometry in the graphics for the selected device</span>
String graphics = <span class="s">&quot;&quot;</span>;
<span class="k">if</span> (device.equals(<span class="s">&quot;computer&quot;</span>)) {
  graphics = <span class="s">&quot;/mainComputer/graphics1&quot;</span>;
}
<span class="k">else if</span> (device.equals(<span class="s">&quot;tablet&quot;</span>)) {
  graphics = <span class="s">&quot;/mainTablet/graphics1&quot;</span>;
}
</div><div class="a" style="left:0;top:0;width:40px;height:603px"><div class="t" style="left:0;width:33.5px;text-align:right;top:3.2px;font-size:11.5px;color:#111">1</div><div class="t" style="left:0;width:33.5px;text-align:right;top:19.2px;font-size:11.5px;color:#8a8a96">2</div><div class="t" style="left:0;width:33.5px;text-align:right;top:35.2px;font-size:11.5px;color:#8a8a96">3</div><div class="t" style="left:0;width:33.5px;text-align:right;top:51.2px;font-size:11.5px;color:#8a8a96">4</div><div class="t" style="left:0;width:33.5px;text-align:right;top:67.2px;font-size:11.5px;color:#8a8a96">5</div><div class="t" style="left:0;width:33.5px;text-align:right;top:83.2px;font-size:11.5px;color:#8a8a96">6</div><div class="t" style="left:0;width:33.5px;text-align:right;top:99.2px;font-size:11.5px;color:#8a8a96">7</div><div class="t" style="left:0;width:33.5px;text-align:right;top:115.2px;font-size:11.5px;color:#8a8a96">8</div><div class="t" style="left:0;width:33.5px;text-align:right;top:131.2px;font-size:11.5px;color:#8a8a96">9</div><div class="t" style="left:0;width:33.5px;text-align:right;top:147.2px;font-size:11.5px;color:#8a8a96">10</div><div class="t" style="left:0;width:33.5px;text-align:right;top:163.2px;font-size:11.5px;color:#8a8a96">11</div><div class="t" style="left:0;width:33.5px;text-align:right;top:179.2px;font-size:11.5px;color:#8a8a96">12</div><div class="t" style="left:0;width:33.5px;text-align:right;top:195.2px;font-size:11.5px;color:#8a8a96">13</div><div class="t" style="left:0;width:33.5px;text-align:right;top:211.2px;font-size:11.5px;color:#8a8a96">14</div><div class="t" style="left:0;width:33.5px;text-align:right;top:227.2px;font-size:11.5px;color:#8a8a96">15</div><div class="t" style="left:0;width:33.5px;text-align:right;top:243.2px;font-size:11.5px;color:#8a8a96">16</div><div class="t" style="left:0;width:33.5px;text-align:right;top:259.2px;font-size:11.5px;color:#8a8a96">17</div><div class="t" style="left:0;width:33.5px;text-align:right;top:275.2px;font-size:11.5px;color:#8a8a96">18</div><div class="t" style="left:0;width:33.5px;text-align:right;top:291.2px;font-size:11.5px;color:#8a8a96">19</div><div class="t" style="left:0;width:33.5px;text-align:right;top:307.2px;font-size:11.5px;color:#8a8a96">20</div><div class="t" style="left:0;width:33.5px;text-align:right;top:323.2px;font-size:11.5px;color:#8a8a96">21</div><div class="t" style="left:0;width:33.5px;text-align:right;top:339.2px;font-size:11.5px;color:#8a8a96">22</div><div class="t" style="left:0;width:33.5px;text-align:right;top:355.2px;font-size:11.5px;color:#8a8a96">23</div><div class="t" style="left:0;width:33.5px;text-align:right;top:371.2px;font-size:11.5px;color:#8a8a96">24</div><div class="t" style="left:0;width:33.5px;text-align:right;top:387.2px;font-size:11.5px;color:#8a8a96">25</div><div class="t" style="left:0;width:33.5px;text-align:right;top:403.2px;font-size:11.5px;color:#8a8a96">26</div><div class="t" style="left:0;width:33.5px;text-align:right;top:419.2px;font-size:11.5px;color:#8a8a96">27</div><div class="t" style="left:0;width:33.5px;text-align:right;top:435.2px;font-size:11.5px;color:#8a8a96">28</div><div class="t" style="left:0;width:33.5px;text-align:right;top:451.2px;font-size:11.5px;color:#8a8a96">29</div><div class="t" style="left:0;width:33.5px;text-align:right;top:467.2px;font-size:11.5px;color:#8a8a96">30</div><div class="t" style="left:0;width:33.5px;text-align:right;top:483.2px;font-size:11.5px;color:#8a8a96">31</div><div class="t" style="left:0;width:33.5px;text-align:right;top:499.2px;font-size:11.5px;color:#8a8a96">32</div><div class="t" style="left:0;width:33.5px;text-align:right;top:515.2px;font-size:11.5px;color:#8a8a96">33</div><div class="t" style="left:0;width:33.5px;text-align:right;top:531.2px;font-size:11.5px;color:#8a8a96">34</div><div class="t" style="left:0;width:33.5px;text-align:right;top:547.2px;font-size:11.5px;color:#8a8a96">35</div><div class="t" style="left:0;width:33.5px;text-align:right;top:563.2px;font-size:11.5px;color:#8a8a96">36</div><div class="t" style="left:0;width:33.5px;text-align:right;top:579.2px;font-size:11.5px;color:#8a8a96">37</div><div class="t" style="left:0;width:33.5px;text-align:right;top:595.2px;font-size:11.5px;color:#8a8a96">38</div></div><svg width="60" height="603" style="left:0;top:0" fill="none"><rect x="37.5" y="212" width="8.5" height="8.5" fill="#fff" stroke="#9a9a9a" stroke-width="1"/><path d="M39.5 216.3 H44" stroke="#222" stroke-width="1.1"/><rect x="37.5" y="244" width="8.5" height="8.5" fill="#fff" stroke="#9a9a9a" stroke-width="1"/><path d="M39.5 248.3 H44" stroke="#222" stroke-width="1.1"/><rect x="37.5" y="276" width="8.5" height="8.5" fill="#fff" stroke="#9a9a9a" stroke-width="1"/><path d="M39.5 280.3 H44" stroke="#222" stroke-width="1.1"/><rect x="37.5" y="308" width="8.5" height="8.5" fill="#fff" stroke="#9a9a9a" stroke-width="1"/><path d="M39.5 312.3 H44" stroke="#222" stroke-width="1.1"/><rect x="37.5" y="340" width="8.5" height="8.5" fill="#fff" stroke="#9a9a9a" stroke-width="1"/><path d="M39.5 344.3 H44" stroke="#222" stroke-width="1.1"/><rect x="37.5" y="372" width="8.5" height="8.5" fill="#fff" stroke="#9a9a9a" stroke-width="1"/><path d="M39.5 376.3 H44" stroke="#222" stroke-width="1.1"/><rect x="37.5" y="516" width="8.5" height="8.5" fill="#fff" stroke="#9a9a9a" stroke-width="1"/><path d="M39.5 520.3 H44" stroke="#222" stroke-width="1.1"/><rect x="37.5" y="564" width="8.5" height="8.5" fill="#fff" stroke="#9a9a9a" stroke-width="1"/><path d="M39.5 568.3 H44" stroke="#222" stroke-width="1.1"/><path d="M41.7 221 V243.5" stroke="#9a9a9a" stroke-width="1"/><path d="M41.7 253 V275.5" stroke="#9a9a9a" stroke-width="1"/><path d="M41.7 285 V307.5" stroke="#9a9a9a" stroke-width="1"/><path d="M41.7 317 V339.5" stroke="#9a9a9a" stroke-width="1"/><path d="M41.7 349 V371.5" stroke="#9a9a9a" stroke-width="1"/><path d="M41.7 255.5 H46" stroke="#9a9a9a" stroke-width="1"/><path d="M41.7 287.5 H46" stroke="#9a9a9a" stroke-width="1"/><path d="M41.7 319.5 H46" stroke="#9a9a9a" stroke-width="1"/><path d="M41.7 351.5 H46" stroke="#9a9a9a" stroke-width="1"/><path d="M41.7 383.5 H46" stroke="#9a9a9a" stroke-width="1"/><path d="M41.7 381 V415.5" stroke="#9a9a9a" stroke-width="1"/><path d="M41.7 415.5 H46" stroke="#9a9a9a" stroke-width="1"/><path d="M41.7 525 V559.5" stroke="#9a9a9a" stroke-width="1"/><path d="M41.7 559.5 H46" stroke="#9a9a9a" stroke-width="1"/><path d="M41.7 573 V603" stroke="#9a9a9a" stroke-width="1"/></svg><div class="a" style="left:54px;top:1px;width:1.3px;height:15px;background:#111"></div></div>
<svg width="1909" height="1079" style="left:0;top:0" fill="none">
<rect x="339.7" y="184.3" width="14" height="12" rx="0.8" stroke="#1ea888" stroke-width="1.3"/><rect x="339" y="182" width="6" height="3" fill="#1ea888"/><circle cx="345.7" cy="189.5" r="2.8" stroke="#1ea888" stroke-width="1.5"/><path d="M347.8 191.6 L350.5 194.3" stroke="#1ea888" stroke-width="1.8"/>
<rect x="424.8" y="182.6" width="11" height="15" fill="#fff" stroke="#6e6e73" stroke-width="1"/><path d="M424.3 182.9 H436.3" stroke="#6e6e73" stroke-width="1.8"/><path d="M426.6 186.4 H432.2 M429.5 190.5 H432.2 M427.40000000000003 192.5 H433.2" stroke="#1ea888" stroke-width="1.1" stroke-linecap="round"/><path d="M429.5 188.5 H433.90000000000003 M429.5 194.5 H433.2" stroke="#6e6e73" stroke-width="1" stroke-linecap="round"/>
<path d="M595.2 185.6 L603.7 193.4 M603.7 185.6 L595.2 193.4" stroke="#c4c4c4" stroke-width="1.2"/>
<rect x="631.8" y="182.6" width="11" height="15" fill="#fff" stroke="#6e6e73" stroke-width="1"/><path d="M631.3 182.9 H643.3" stroke="#6e6e73" stroke-width="1.8"/><path d="M633.5999999999999 186.4 H639.1999999999999 M636.5 190.5 H639.1999999999999 M634.4 192.5 H640.1999999999999" stroke="#1ea888" stroke-width="1.1" stroke-linecap="round"/><path d="M636.5 188.5 H640.9 M636.5 194.5 H640.1999999999999" stroke="#6e6e73" stroke-width="1" stroke-linecap="round"/>
<path d="M760.4 185.6 L768.9 193.4 M768.9 185.6 L760.4 193.4" stroke="#c4c4c4" stroke-width="1.2"/>
<rect x="796.8" y="182.6" width="11" height="15" fill="#fff" stroke="#6e6e73" stroke-width="1"/><path d="M796.3 182.9 H808.3" stroke="#6e6e73" stroke-width="1.8"/><path d="M798.5999999999999 186.4 H804.1999999999999 M801.5 190.5 H804.1999999999999 M799.4 192.5 H805.1999999999999" stroke="#1ea888" stroke-width="1.1" stroke-linecap="round"/><path d="M801.5 188.5 H805.9 M801.5 194.5 H805.1999999999999" stroke="#6e6e73" stroke-width="1" stroke-linecap="round"/>
<path d="M950.5 185.6 L959.0 193.4 M959.0 185.6 L950.5 193.4" stroke="#c4c4c4" stroke-width="1.2"/>
<rect x="986.8" y="182.6" width="11" height="15" fill="#fff" stroke="#6e6e73" stroke-width="1"/><path d="M986.3 182.9 H998.3" stroke="#6e6e73" stroke-width="1.8"/><path d="M988.5999999999999 186.4 H994.1999999999999 M991.5 190.5 H994.1999999999999 M989.4 192.5 H995.1999999999999" stroke="#1ea888" stroke-width="1.1" stroke-linecap="round"/><path d="M991.5 188.5 H995.9 M991.5 194.5 H995.1999999999999" stroke="#6e6e73" stroke-width="1" stroke-linecap="round"/>
<path d="M1079.4 185.6 L1087.9 193.4 M1087.9 185.6 L1079.4 193.4" stroke="#c4c4c4" stroke-width="1.2"/>
<rect x="1115.8" y="182.6" width="11" height="15" fill="#fff" stroke="#6e6e73" stroke-width="1"/><path d="M1115.3 182.9 H1127.3" stroke="#6e6e73" stroke-width="1.8"/><path d="M1117.6 186.4 H1123.2 M1120.5 190.5 H1123.2 M1118.3999999999999 192.5 H1124.2" stroke="#1ea888" stroke-width="1.1" stroke-linecap="round"/><path d="M1120.5 188.5 H1124.8999999999999 M1120.5 194.5 H1124.2" stroke="#6e6e73" stroke-width="1" stroke-linecap="round"/>
<path d="M1217.3 185.6 L1225.8 193.4 M1225.8 185.6 L1217.3 193.4" stroke="#c4c4c4" stroke-width="1.2"/>
<rect x="1253.8" y="182.6" width="11" height="15" fill="#fff" stroke="#6e6e73" stroke-width="1"/><path d="M1253.3 182.9 H1265.3" stroke="#6e6e73" stroke-width="1.8"/><path d="M1255.6 186.4 H1261.2 M1258.5 190.5 H1261.2 M1256.3999999999999 192.5 H1262.2" stroke="#1ea888" stroke-width="1.1" stroke-linecap="round"/><path d="M1258.5 188.5 H1262.8999999999999 M1258.5 194.5 H1262.2" stroke="#6e6e73" stroke-width="1" stroke-linecap="round"/>
<path d="M1337 185.5 L1346 194.5 M1346 185.5 L1337 194.5" stroke="#333" stroke-width="1.4"/><rect x="1245" y="201" width="110" height="2" fill="#3a8cd2"/>
<rect x="1466.5" y="183.5" width="8.5" height="7" stroke="#aaa" stroke-width="1.1"/><path d="M1466.5 184 H1475" stroke="#aaa" stroke-width="1.6"/><path d="M1481 185 H1489" stroke="#aaa" stroke-width="1.5"/><path d="M1481 188 H1489 L1485 192 Z" fill="#aaa"/>
<path d="M1479.5 214 L1482.5 211 L1485.5 214" stroke="#c8c8c8" stroke-width="1"/><path d="M1479.5 796 L1482.5 799 L1485.5 796" stroke="#c8c8c8" stroke-width="1"/>
<path d="M369.5 812.5 H378.5 L374 817.5 Z" fill="#111"/><path d="M393 812 L390 815 L393 818" stroke="#d0d0d0" stroke-width="1"/><path d="M1464 812 L1467 815 L1464 818" stroke="#d0d0d0" stroke-width="1"/>
</svg>
<!-- chat -->
<div class="t" style="left:334.60px;top:839.71px;font-size:20.9px;color:#2d5fa8;-webkit-text-stroke:0">Chatbot</div>
<div class="t" style="left:354.20px;top:867.70px;font-size:11.7px;color:#0a0a14;">Programming</div>
<div class="t" style="left:332.80px;top:894.80px;font-size:11.7px;color:#0a0a14;">Conversation:</div>
<div class="a" style="left:415px;top:891px;width:963px;height:20px;background:#ececee;border:1px solid #d2d2d6;border-radius:2px"></div>
<div class="t" style="left:428.30px;top:894.80px;font-size:11.7px;color:#0a0a14;">New conversation</div>
<div class="t" style="left:1388.00px;top:895.40px;font-size:11.7px;color:#0a0a14;">Tokens used:</div>
<div class="t" style="left:1464.40px;top:895.40px;font-size:11.7px;color:#0a0a14;">0 | 0</div>
<div class="a" style="left:331px;top:914px;width:1156px;height:109px;background:#fff;border:1px solid #cfcfd3"></div>
<div class="a" style="left:332px;top:995.5px;width:1154px;height:1px;background:#d0d0d4"></div>
<div class="t" style="left:335.00px;top:1003.90px;font-size:11.7px;color:#9a9aa2;">Enter prompt here</div>
<svg width="1909" height="1079" style="left:0;top:0" fill="none">
<path d="M1434.7 847 H1443.2 L1439 851.2 Z" fill="#aaa"/><rect x="1450" y="845.5" width="8" height="7" stroke="#aaa" stroke-width="1.1"/><path d="M1450 846 H1458" stroke="#aaa" stroke-width="1.5"/><path d="M1466 844.5 H1471 V850 L1472.5 851.5 H1464.5 L1466 850 Z M1468.5 851.5 V854.5" fill="#aaa" stroke="#aaa" stroke-width="0.8"/><path d="M1479 844.8 L1488.5 854.2 M1488.5 844.8 L1479 854.2" stroke="#aaa" stroke-width="1.2"/>
<rect x="336.5" y="866.6" width="11" height="15" fill="#fff" stroke="#6e6e73" stroke-width="1"/><path d="M336 866.9 H348" stroke="#6e6e73" stroke-width="1.8"/><path d="M338.3 870.4 H343.9 M341.2 874.5 H343.9 M339.1 876.5 H344.9" stroke="#1ea888" stroke-width="1.1" stroke-linecap="round"/><path d="M341.2 872.5 H345.6 M341.2 878.5 H344.9" stroke="#6e6e73" stroke-width="1" stroke-linecap="round"/>
<path d="M434.4 872 H441 L437.7 876.4 Z" fill="#111"/><path d="M453.5 866 V881.4 M484.7 866 V881.4" stroke="#d0d0d4" stroke-width="1"/>
<rect x="461.9" y="866.8" width="15" height="14.5" rx="1" stroke="#888" stroke-width="1"/><path d="M461.9 867.5 H477" stroke="#888" stroke-width="1.6"/><path d="M464.5 870.5 L467.5 872.5 L464.5 874.5 M468.5 875 H472" stroke="#888" stroke-width="0.9"/><path d="M477 878 H471 M473 876 L471 878 L473 880" stroke="#888" stroke-width="1.3"/>
<path d="M499.5 867 V880.5 M492.8 873.5 H506" stroke="#3a8cd2" stroke-width="1.2"/><path d="M516.5 868.3 H528.5 M520.5 867 H524.5" stroke="#3a8cd2" stroke-width="1.2"/><path d="M517.5 870 H527.5 V880 Q527.5 881.7 525.8 881.7 H519.2 Q517.5 881.7 517.5 880 Z" fill="#3a8cd2"/><path d="M520.3 871.5 V879.5 M522.5 871.5 V879.5 M524.7 871.5 V879.5" stroke="#fff" stroke-width="0.9"/><path d="M541.5 866.5 L545.5 874" stroke="#666" stroke-width="1.2"/><path d="M544 873 L547.5 875 L552 880.5 Q549 882.5 545 881.5 Q543 877 544 873 Z" fill="#f2b35c"/>
<path d="M1363.6 898.5 H1371 L1367.3 902.7 Z" fill="#111"/>
<path d="M339.8 1030.6 H350.2 L352.6 1033 V1038.4 L350.2 1040.8 H339.8 L337.4 1038.4 V1033 Z" stroke="#3a8cd2" stroke-width="1.1"/><path d="M342 1035.4 H348.8 M346.4 1033.1 L348.8 1035.4 L346.4 1037.7" stroke="#3a8cd2" stroke-width="1.1"/><path d="M366.5 1032.3 V1039.7 A1.05 1.05 0 0 0 368.6 1039.7 V1030.3 A2.15 2.15 0 0 0 364.3 1030.3 V1040.4 A3.1 3.1 0 0 0 370.5 1040.4 V1032.2" stroke="#3a8cd2" stroke-width="1"/>
</svg>
<!-- settings -->
<div class="t" style="left:1505.20px;top:185.90px;font-size:20.2px;color:#2d5fa8;-webkit-text-stroke:0">Settings</div>
<div class="t" style="left:1504.20px;top:211.40px;font-size:13.7px;color:#3b78bf;">Method</div>
<div class="t" style="left:1503.50px;top:241.30px;font-size:11.7px;color:#0a0a14;">Name:</div>
<div class="a" style="left:1548px;top:238px;width:355px;height:18px;background:#fff;border:1px solid #cdcdd1"></div>
<div class="t" style="left:1551.30px;top:241.30px;font-size:11.7px;color:#0a0a14;">setMaterial</div>
<div class="a" style="left:1504px;top:263px;width:14px;height:13px;background:#f4f4f4;border:1px solid #9a9a9e;border-radius:1px"></div>
<div class="t" style="left:1523.00px;top:263.10px;font-size:11.7px;color:#0a0a14;">Show in Model Builder</div>
<div class="a" style="left:1498px;top:286px;width:411px;height:1px;background:#dcdce0"></div>
<div class="t" style="left:1524.00px;top:293.28px;font-size:14.2px;color:#2d6bb0;">Inputs and Output</div>
<div class="t" style="left:1516.00px;top:324.30px;font-size:11.7px;color:#0a0a14;">Inputs</div>
<div class="a" style="left:1503.5px;top:330px;width:8.5px;height:1px;background:#d8d8dc"></div>
<div class="a" style="left:1553px;top:330px;width:350px;height:1px;background:#d8d8dc"></div>
<div class="a" style="left:1503.5px;top:344px;width:399px;height:240px;background:#fcfcfe;border:1px solid #d6d6da;border-bottom:3px solid #cfcfd3"></div>
<div class="a" style="left:1504.5px;top:345px;width:378.5px;height:26px;background:#efeff1"></div>
<div class="a" style="left:1583.3px;top:345px;width:1px;height:26px;background:#d2d2d6"></div>
<div class="a" style="left:1683.5px;top:345px;width:1px;height:26px;background:#d2d2d6"></div>
<div class="a" style="left:1783.5px;top:345px;width:1px;height:26px;background:#d2d2d6"></div>
<div class="a" style="left:1883.5px;top:345px;width:1px;height:26px;background:#d2d2d6"></div>
<div class="a" style="left:1884.5px;top:345px;width:17.5px;height:26px;background:#efeff1"></div>
<div class="a" style="left:1884.5px;top:345px;width:17.5px;height:26px;overflow:hidden"><div class="t" style="left:5.00px;top:9.90px;font-size:11.7px;color:#0a0a14;">Unit</div>
</div>
<div class="t" style="left:1522.40px;top:354.90px;font-size:11.7px;color:#0a0a14;">Name</div>
<div class="t" style="left:1589.40px;top:354.90px;font-size:11.7px;color:#0a0a14;">Type</div>
<div class="t" style="left:1689.40px;top:354.90px;font-size:11.7px;color:#0a0a14;">Default</div>
<div class="t" style="left:1789.40px;top:354.90px;font-size:11.7px;color:#0a0a14;">Description</div>
<div class="t" style="left:1503.60px;top:616.70px;font-size:11.7px;color:#0a0a14;">Output:</div>
<div class="a" style="left:1554.5px;top:612px;width:348px;height:19.5px;background:#ececee;border:1px solid #d2d2d6;border-radius:2px"></div>
<div class="t" style="left:1567.00px;top:616.40px;font-size:11.7px;color:#0a0a14;">None</div>
<svg width="1909" height="1079" style="left:0;top:0" fill="none">
<path d="M1851.8 192.4 H1860.5 L1856.2 196.6 Z" fill="#aaa"/><rect x="1867" y="191" width="8" height="6.8" stroke="#aaa" stroke-width="1.1"/><path d="M1867 191.5 H1875" stroke="#aaa" stroke-width="1.5"/><path d="M1883.5 190 H1888.5 V195.5 L1890 197 H1882 L1883.5 195.5 Z M1886 197 V200" fill="#aaa" stroke="#aaa" stroke-width="0.8"/><path d="M1897 190.5 L1904.5 198 M1904.5 190.5 L1897 198" stroke="#aaa" stroke-width="1.2"/>
<path d="M1505.2 298.5 L1509 302.3 L1512.8 298.5" stroke="#3a8cd2" stroke-width="1.3"/>
<path d="M1508 349 L1512 352.5 L1508 356 Z M1513 349 L1517 352.5 L1513 356 Z" fill="#111"/>
<path d="M1513.5 593.5 V605" stroke="#777" stroke-width="1.1"/><path d="M1513.5 591.3 L1510.5 596 H1516.5 Z" fill="#777"/><path d="M1536.7 591.3 V603" stroke="#777" stroke-width="1.1"/><path d="M1536.7 605.2 L1533.7 600.5 H1539.7 Z" fill="#777"/><path d="M1559.6 591.5 V604.5 M1553 598 H1566.2" stroke="#3a8cd2" stroke-width="1.2"/><path d="M1576.5 591.5 H1578 M1576.5 594.5 H1578 M1576.5 597.5 H1578 M1576.5 600.5 H1578 M1579.5 591.5 H1589.5 M1579.5 594.5 H1589.5 M1579.5 597.5 H1585 M1579.5 600.5 H1584" stroke="#888" stroke-width="1"/><path d="M1586 599.5 L1590 603.5 M1590 599.5 L1586 603.5" stroke="#888" stroke-width="0.9"/><rect x="1598.5" y="596.5" width="11" height="9" stroke="#999" stroke-width="0.9"/><path d="M1598.5 599.5 H1609.5 M1598.5 602.5 H1609.5 M1602 596.5 V605.5 M1605.5 596.5 V605.5" stroke="#999" stroke-width="0.7"/><path d="M1602.5 601 L1611.5 591.5 L1614 594 L1605 603.5 L1601.5 604.5 Z" fill="#888"/>
<path d="M1889 619.6 H1896.5 L1892.7 623.8 Z" fill="#111"/>
</svg>
</body></html>
